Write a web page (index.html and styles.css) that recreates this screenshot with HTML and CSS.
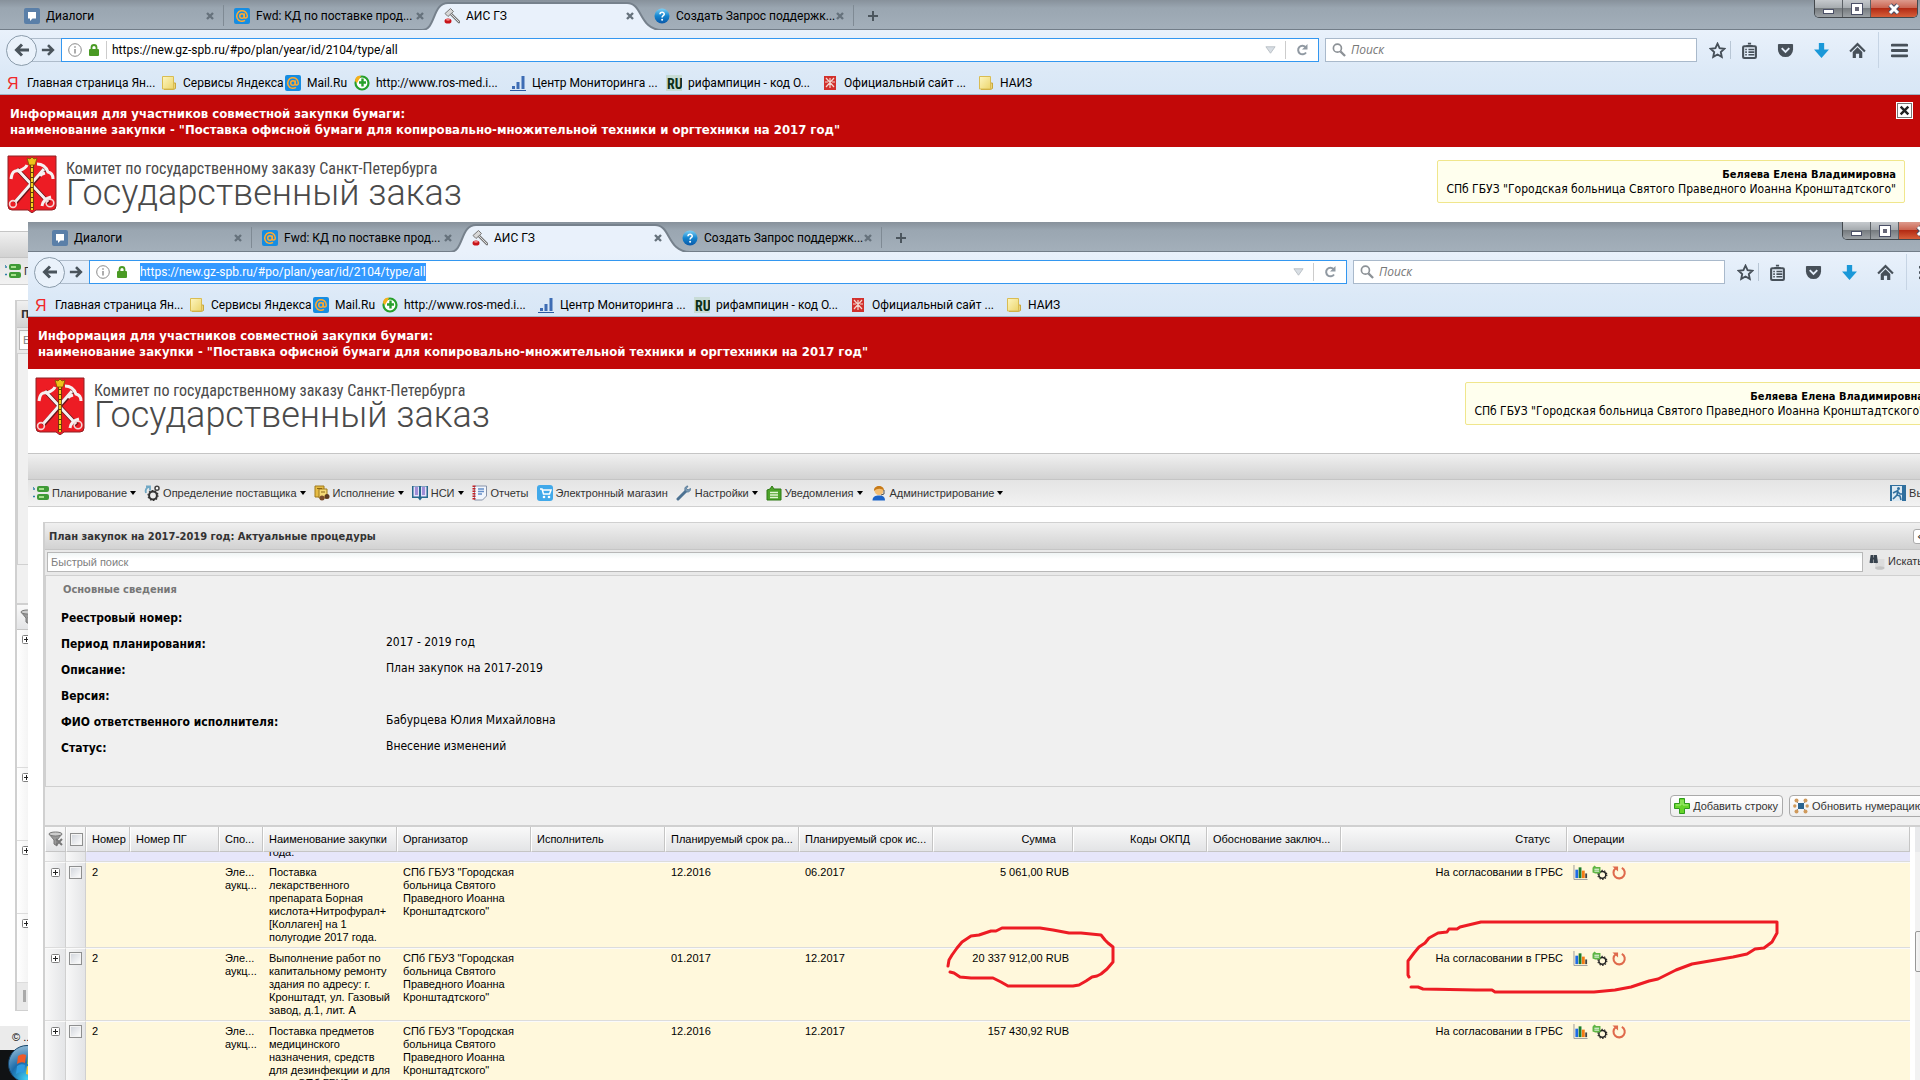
FILE: index.html
```
<!DOCTYPE html>
<html lang="ru">
<head>
    <meta charset="utf-8">
    <title>АИС ГЗ</title>
    <meta name="viewport" content="width=device-width, initial-scale=1.0">
    <link rel="stylesheet" href="styles.css">
</head>
<body>
    <!-- Иконки -->
    <svg class="sprite" aria-hidden="true">
        <defs>
            <linearGradient id="blueBall" x1="0" y1="0" x2="0" y2="1">
                <stop offset="0" stop-color="#7fd0f4"/><stop offset=".5" stop-color="#1485cf"/><stop offset="1" stop-color="#0a58a8"/>
            </linearGradient>
            <linearGradient id="folderFill" x1="0" y1="0" x2="1" y2="1">
                <stop offset="0" stop-color="#fdf6c0"/><stop offset="1" stop-color="#ecd56c"/>
            </linearGradient>
        </defs>
        <symbol id="i-dialog" viewBox="0 0 16 16"><rect width="16" height="16" rx="2" fill="#5a7fa8"/><path d="M4 4h8v6.500H8.500L6 13v-2.500H4z" fill="#fff"/></symbol>
        <symbol id="i-mail" viewBox="0 0 16 16"><rect width="16" height="16" rx="2" fill="#168de2"/><circle cx="8" cy="8" r="2.300" fill="none" stroke="#ffa930" stroke-width="1.500"/><path d="M10.300 5.500v3.300c0 2 3 1.600 3-.8a5.300 5.300 0 1 0-2.300 4.400" fill="none" stroke="#ffa930" stroke-width="1.500"/></symbol>
        <symbol id="i-gavel" viewBox="0 0 16 16"><path d="M7 6l8 8" stroke="#777" stroke-width="2.600" stroke-linecap="round"/><path d="M7 6l8 8" stroke="#ddd" stroke-width="1"/><path d="M1 5.500L6.500.5l3 3L4 8.500z" fill="#d8d8d8" stroke="#777"/><ellipse cx="4" cy="13" rx="3.500" ry="2.600" fill="#c8141a"/><ellipse cx="4" cy="11.800" rx="2" ry="1" fill="#f08080"/></symbol>
        <symbol id="i-help" viewBox="0 0 16 16"><circle cx="8" cy="8" r="7.500" fill="url(#blueBall)"/><path d="M6 6.200c0-2.800 4.300-2.500 4.200 0 0 1.500-2.100 1.600-2.100 3.300" fill="none" stroke="#fff" stroke-width="1.600"/><circle cx="8.100" cy="11.800" r="1" fill="#fff"/></symbol>
        <symbol id="i-x" viewBox="0 0 10 10"><path d="M2 2l6 6M8 2L2 8" stroke="#66727c" stroke-width="2.400"/></symbol>
        <symbol id="i-plus" viewBox="0 0 12 12"><path d="M6 1v10M1 6h10" stroke="#4c565e" stroke-width="2"/></symbol>
        <symbol id="i-back" viewBox="0 0 16 16"><path d="M15 8H3M8 2.500L2.500 8 8 13.500" fill="none" stroke="#4a545c" stroke-width="3"/></symbol>
        <symbol id="i-fwd" viewBox="0 0 16 16"><path d="M1 8h12M8 2.500L13.500 8 8 13.500" fill="none" stroke="#4a545c" stroke-width="3"/></symbol>
        <symbol id="i-info" viewBox="0 0 14 14"><circle cx="7" cy="7" r="6.300" fill="none" stroke="#8b8b8b"/><path d="M7 6v4.500M7 3.200v1.600" stroke="#8b8b8b" stroke-width="1.400"/></symbol>
        <symbol id="i-lock" viewBox="0 0 12 14"><rect x="1" y="6" width="10" height="7" rx="1" fill="#4a9a24"/><path d="M3.500 6.500V4.500a2.500 2.500 0 0 1 5 0v2" fill="none" stroke="#4a9a24" stroke-width="1.800"/></symbol>
        <symbol id="i-drop" viewBox="0 0 12 8"><path d="M1 .5h10L6 7.500z" fill="#d8dee4" stroke="#b8bec4"/></symbol>
        <symbol id="i-reload" viewBox="0 0 14 14"><path d="M10.500 4A4.300 4.300 0 1 0 11 9.500" fill="none" stroke="#9099a2" stroke-width="2"/><path d="M12.500 1v5.500H7z" fill="#9099a2"/></symbol>
        <symbol id="i-search" viewBox="0 0 15 15"><circle cx="5.800" cy="5.500" r="4.300" fill="none" stroke="#8c9196" stroke-width="1.800"/><path d="M9 9l5 5" stroke="#8c9196" stroke-width="2.400"/></symbol>
        <symbol id="i-star" viewBox="0 0 18 18"><path d="M9 1.800l2.200 4.700 5.100.6-3.800 3.500 1 5.200L9 13.200l-4.500 2.600 1-5.200L1.700 7.100l5.100-.6z" fill="none" stroke="#475059" stroke-width="2"/></symbol>
        <symbol id="i-list" viewBox="0 0 16 16"><rect x="2" y="4" width="12" height="11" rx="1" fill="none" stroke="#475059" stroke-width="2"/><path d="M5 3.500h6M6.500 1.500h3M4 7h1.500M7 7h5.500M4 9.500h1.500M7 9.500h5.500M4 12h1.500M7 12h5.500" stroke="#475059" stroke-width="1.500"/></symbol>
        <symbol id="i-pocket" viewBox="0 0 18 16"><path d="M2 1h14a1 1 0 0 1 1 1v5a8 8 0 0 1-16 0V2a1 1 0 0 1 1-1z" fill="#475059"/><path d="M5 5.500l4 4 4-4" fill="none" stroke="#e4eefa" stroke-width="2"/></symbol>
        <symbol id="i-down" viewBox="0 0 16 16"><path d="M5.500 1h5v6H15l-7 8-7-8h4.500z" fill="#1a98d8"/></symbol>
        <symbol id="i-home" viewBox="0 0 16 16"><path d="M1 9l7-7 7 7" fill="none" stroke="#475059" stroke-width="2"/><path d="M3.500 9.500L8 5l4.500 4.500V15h-3v-4h-3v4h-3z" fill="#475059"/></symbol>
        <symbol id="i-menu" viewBox="0 0 16 14"><path d="M1 2h14M1 7h14M1 12h14" stroke="#475059" stroke-width="2.600" stroke-linecap="round"/></symbol>
        <symbol id="i-yandex" viewBox="0 0 16 16"><text x="2" y="14" font-family="Liberation Sans, sans-serif" font-size="16" fill="#f0282a">Я</text></symbol>
        <symbol id="i-folder" viewBox="0 0 16 16"><path d="M3 14.500h9.500l2-1V8h-2" fill="#ead37a" stroke="#c9a83c"/><path d="M1.500 1.500h11v12.500h-11z" fill="url(#folderFill)" stroke="#d9bc52"/></symbol>
        <symbol id="i-rosmed" viewBox="0 0 16 16"><circle cx="8" cy="8" r="6.500" fill="#fff" stroke="#27a02b" stroke-width="2.200"/><path d="M1 6c0-4 3-6 6-5L3 8z" fill="#f5b01c"/><path d="M8.500 3.500v8M5 7.500h7" stroke="#27a02b" stroke-width="2.400"/></symbol>
        <symbol id="i-chart" viewBox="0 0 16 16"><path d="M0 15.500h16" stroke="#2c5aa0"/><path d="M3.500 14v-3M8 14V7M13 14V1" stroke="#3d6cb4" stroke-width="3"/></symbol>
        <symbol id="i-ru" viewBox="0 0 16 16"><rect width="16" height="16" fill="#c8dcd6"/><text x="1" y="14" font-family="Roboto Condensed, sans-serif" font-size="14" font-weight="bold" fill="#0c3018">RU</text></symbol>
        <symbol id="i-arms" viewBox="0 0 16 16"><rect x="2" y="1" width="12" height="14" fill="#d2302c"/><path d="M8 3v10M4 3l8 9M12 3l-8 9M3 7h3M10 7h3" stroke="#f2d8d0" stroke-width="1.200"/></symbol>
        <symbol id="i-crest" viewBox="0 0 50 58">
            <path d="M1 1h48v50q0 4-4 4H29l-4 3-4-3H5q-4 0-4-4z" fill="#ed1c24" stroke="#8f2025"/>
            <g fill="none" stroke="#6d1418" stroke-width="4.500"><path d="M8 48L38 14M42 48L10 14"/></g>
            <g fill="none" stroke="#f5f1f1" stroke-width="3"><path d="M8 47L37 14M41 47L10 14"/><path d="M4 24q1-10 8-8 7-3 8-6M30 9q8 0 11 8 5 1 5 7M38 18q-4 1-5 3"/><path d="M35 51q1-7 9-9"/></g>
            <circle cx="6" cy="49" r="3.400" fill="none" stroke="#f5d5d5" stroke-width="1.600"/><circle cx="43" cy="48" r="3.800" fill="none" stroke="#f5d5d5" stroke-width="1.600"/>
            <path d="M25 8v47" stroke="#5e3c08" stroke-width="3.600"/><path d="M25 8v47" stroke="#f3d21c" stroke-width="2" stroke-dasharray="4 1"/>
            <path d="M20 3l3 1 2-2 2 2 3-1-2 7h-6z" fill="#eec21a" stroke="#7a4e08" stroke-width=".8"/>
        </symbol>
        <symbol id="i-plan" viewBox="0 0 16 16"><path d="M0 4h2M0 11.500h2M0 2v1" stroke="#2f7fa8" stroke-width="1.600"/><rect x="4" y="1" width="12" height="6" rx="2" fill="#3f9a37"/><rect x="4" y="9" width="12" height="6" rx="2" fill="#3f9a37"/><path d="M6 4h5M6 12h5" stroke="#a6e08c" stroke-width="2"/></symbol>
        <symbol id="i-gears" viewBox="0 0 16 16"><circle cx="9" cy="10.500" r="3.900" fill="none" stroke="#333" stroke-width="2" /><circle cx="9" cy="10.500" r="5" fill="none" stroke="#333" stroke-width="1.200" stroke-dasharray="1.500 1.600"/><circle cx="13" cy="3.300" r="2" fill="#fff" stroke="#444" stroke-width="1.500"/><path d="M2 8c-1-3 0-5 3-6M2 1.500h4v4" fill="none" stroke="#6fa7c4" stroke-width="1.800"/></symbol>
        <symbol id="i-exec" viewBox="0 0 16 16"><path d="M1 1h9v11H1z" fill="#e6bc44" stroke="#a07a1c"/><path d="M5 4h8v9H5z" fill="#f4d876" stroke="#a07a1c"/><path d="M3 3.500h5M7 7h4" stroke="#8a6414"/><circle cx="13" cy="11.500" r="2.500" fill="#5c3a22"/><circle cx="8" cy="13" r="2.500" fill="#7b4c2c"/></symbol>
        <symbol id="i-book" viewBox="0 0 16 16"><path d="M0 1h16v12h-6L8 15.500 6 13H0z" fill="#27688c"/><path d="M1.500 1.500H7v10H1.500zM9 1.500h5.500v10H9z" fill="#e6e0fa"/><path d="M3 3h3M3 5h3M3 7h3M3 9h3M10 3h3M10 5h3M10 7h3M10 9h3" stroke="#5b3fb4"/></symbol>
        <symbol id="i-report" viewBox="0 0 16 16"><path d="M2.500 1h12v10l-4 4h-8z" fill="#f1f5fc" stroke="#8792a8"/><path d="M2 .5v15" stroke="#c42228" stroke-width="3" stroke-dasharray="1.500 1"/><path d="M6 4h6M6 6.500h6M6 9h4" stroke="#668ec8" stroke-width="1.400"/></symbol>
        <symbol id="i-shop" viewBox="0 0 16 16"><rect width="16" height="16" rx="3" fill="#41a9ea"/><path d="M3 4h2l1.500 5h6L14 5H6" fill="none" stroke="#fff" stroke-width="1.500"/><circle cx="7" cy="12" r="1.300" fill="#fff"/><circle cx="12" cy="12" r="1.300" fill="#fff"/></symbol>
        <symbol id="i-wrench" viewBox="0 0 16 16"><path d="M2 14l8-8" stroke="#4d7292" stroke-width="3" stroke-linecap="round"/><path d="M14.500 3.500L12 5l-1.500-1.500L12 1C9 1 8 4 9.500 6S15 7 14.500 3.500z" fill="#7d9cb6" stroke="#4d7292" stroke-width=".8"/></symbol>
        <symbol id="i-notice" viewBox="0 0 16 16"><path d="M1 5l3-1 2-3 2 3h7v11H1z" fill="#4da32a" stroke="#2f7a14"/><path d="M4 7.500h8M4 10h8M4 12.500h8" stroke="#e3f6d4" stroke-width="1.300"/></symbol>
        <symbol id="i-admin" viewBox="0 0 16 16"><path d="M1.500 15.500c0-4 3-5 6.500-5s6 1 6 5z" fill="#1d64c8"/><circle cx="8" cy="5.500" r="4.500" fill="#f4bf74"/><path d="M3 6C2.500-.8 13.500-.8 13 6 11 3 6 3 3 6z" fill="#c77a18"/><path d="M13 5v4l-3 1" fill="none" stroke="#555"/></symbol>
        <symbol id="i-exit" viewBox="0 0 16 16"><rect width="16" height="16" fill="#2f6f9e"/><path d="M2 1h10v15H2z" fill="#dce9f2"/><circle cx="8.500" cy="3.500" r="1.500" fill="#2f6f9e"/><path d="M8 5l-1 5-4 4M7 10l3 1 1 4M3 8l4-2 3 3h3" fill="none" stroke="#2f6f9e" stroke-width="1.600"/></symbol>
        <symbol id="i-find" viewBox="0 0 16 16"><path d="M6 5h9.500v9.500H6z" fill="#dcdcdc"/><ellipse cx="10.800" cy="14" rx="4.700" ry="1.800" fill="#c4c4c4"/><path d="M1.500 9l1-7h1v7M6 9V2h1l1 7M3.500 4.500h3" fill="none" stroke="#37424d" stroke-width="2"/></symbol>
        <symbol id="i-add" viewBox="0 0 16 16"><path d="M5.500.5h5v5h5v5h-5v5h-5v-5h-5v-5h5z" fill="#66d42a" stroke="#2f9a1c"/><path d="M7 2v5H2M9 2v5h5" fill="none" stroke="#a8ee7c"/></symbol>
        <symbol id="i-renum" viewBox="0 0 16 16"><path d="M3 3l10 10M13 3L3 13" stroke="#8f8f8f"/><rect x="5" y="5" width="6" height="6" fill="#2b648f"/><g fill="#cf9a5c"><circle cx="3.500" cy="2.500" r="2"/><circle cx="12.500" cy="2.500" r="2"/><circle cx="1.800" cy="8" r="1.700"/><circle cx="14.200" cy="8" r="1.700"/><circle cx="3.500" cy="13.500" r="2"/><circle cx="12.500" cy="13.500" r="2"/></g></symbol>
        <symbol id="i-filter" viewBox="0 0 16 16"><path d="M1 3h13l-5 6v6l-3-2V9z" fill="#999" stroke="#777"/><ellipse cx="7.500" cy="3" rx="6.500" ry="2" fill="#ccc" stroke="#777"/><path d="M8 8l6 6M14 8l-6 6" stroke="#777" stroke-width="2"/></symbol>
        <symbol id="i-expand" viewBox="0 0 9 9"><rect x=".5" y=".5" width="8" height="8" rx="1" fill="#fff" stroke="#808080"/><path d="M2 4.500h5M4.500 2v5" stroke="#222"/></symbol>
        <symbol id="i-bars" viewBox="0 0 16 16"><path d="M.5 0v15.500H15" fill="none" stroke="#999"/><path d="M3.500 14V5" stroke="#1e6be6" stroke-width="3"/><path d="M7 14V2.500" stroke="#1d7c2c" stroke-width="3"/><path d="M10.500 14V6" stroke="#f47a14" stroke-width="3"/><path d="M13.500 14V9" stroke="#444" stroke-width="2"/></symbol>
        <symbol id="i-oper" viewBox="0 0 16 16"><circle cx="10.500" cy="10.500" r="3.700" fill="none" stroke="#222" stroke-width="1.600"/><circle cx="10.500" cy="10.500" r="4.800" fill="none" stroke="#222" stroke-width="1.200" stroke-dasharray="1.500 1.500"/><path d="M0 3l2-2.500L4 2h4.500v7H3L0 8z" fill="#5fb544"/><path d="M2 4.500h5M2 6.500h5" stroke="#fff"/></symbol>
        <symbol id="i-undo" viewBox="0 0 16 16"><path d="M11 3a6 6 0 1 1-6.500.5" fill="none" stroke="#df6a4c" stroke-width="2.200"/><path d="M1 1.500h6v5.500z" fill="#df6a4c"/></symbol>
    </svg>

    <!-- Общая верхняя часть обоих окон, вставляется из script.js -->
    <template id="window-top">
        <div class="tabs">
            <div class="tab"><svg class="icon"><use href="#i-dialog"/></svg><span>Диалоги</span><button class="tab-close" aria-label="Закрыть"><svg><use href="#i-x"/></svg></button></div>
            <div class="tab tab-next"><svg class="icon"><use href="#i-mail"/></svg><span>Fwd: КД по поставке прод...</span><button class="tab-close" aria-label="Закрыть"><svg><use href="#i-x"/></svg></button></div>
            <div class="tab active"><svg class="tab-shape" viewBox="0 0 240 28" preserveAspectRatio="none"><path d="M0 28C14 28 10 1 26 1H205C221 1 217 28 240 28" /></svg><svg class="icon"><use href="#i-gavel"/></svg><span>АИС ГЗ</span><button class="tab-close" aria-label="Закрыть"><svg><use href="#i-x"/></svg></button></div>
            <div class="tab"><svg class="icon"><use href="#i-help"/></svg><span>Создать Запрос поддержк...</span><button class="tab-close" aria-label="Закрыть"><svg><use href="#i-x"/></svg></button></div>
            <button class="tab-new" aria-label="Новая вкладка"><svg><use href="#i-plus"/></svg></button>
            <div class="win-buttons">
                <button class="win-min" aria-label="Свернуть"><i></i></button>
                <button class="win-max" aria-label="Развернуть"><i></i></button>
                <button class="win-close" aria-label="Закрыть окно"><svg viewBox="0 0 12 12"><path d="M2 2l8 8M10 2l-8 8" stroke="#4a4f66" stroke-width="5"/><path d="M2 2l8 8M10 2l-8 8" stroke="#fff" stroke-width="3"/></svg></button>
            </div>
        </div>
        <div class="toolbar">
            <button class="nav-back" aria-label="Назад"><svg class="icon"><use href="#i-back"/></svg></button>
            <button class="nav-fwd" aria-label="Вперёд"><svg class="icon"><use href="#i-fwd"/></svg></button>
            <div class="url">
                <svg class="icon-s"><use href="#i-info"/></svg>
                <svg class="icon-s"><use href="#i-lock"/></svg>
                <input type="text" aria-label="Адрес" value="https://new.gz-spb.ru/#po/plan/year/id/2104/type/all">
                <svg class="url-drop"><use href="#i-drop"/></svg>
                <button class="url-reload" aria-label="Обновить"><svg class="icon-s"><use href="#i-reload"/></svg></button>
            </div>
            <div class="search"><svg class="icon-s"><use href="#i-search"/></svg><input type="text" aria-label="Поиск" placeholder="Поиск"></div>
            <div class="tools">
                <button class="tool tool-star" aria-label="Закладка"><svg><use href="#i-star"/></svg></button>
                <button class="tool" aria-label="Список"><svg><use href="#i-list"/></svg></button>
                <button class="tool" aria-label="Pocket"><svg><use href="#i-pocket"/></svg></button>
                <button class="tool" aria-label="Загрузки"><svg><use href="#i-down"/></svg></button>
                <button class="tool" aria-label="Домой"><svg><use href="#i-home"/></svg></button>
                <button class="tool tool-menu" aria-label="Меню"><svg><use href="#i-menu"/></svg></button>
            </div>
        </div>
        <div class="bookmarks">
            <a class="long" href="#"><svg class="icon"><use href="#i-yandex"/></svg>Главная страница Ян...</a>
            <a class="mid" href="#"><svg class="icon"><use href="#i-folder"/></svg>Сервисы Яндекса</a>
            <a class="short" href="#"><svg class="icon"><use href="#i-mail"/></svg>Mail.Ru</a>
            <a class="long" href="#"><svg class="icon"><use href="#i-rosmed"/></svg>http://www.ros-med.i...</a>
            <a class="long" href="#"><svg class="icon"><use href="#i-chart"/></svg>Центр Мониторинга ...</a>
            <a class="long" href="#"><svg class="icon"><use href="#i-ru"/></svg>рифампицин - код О...</a>
            <a class="long" href="#"><svg class="icon"><use href="#i-arms"/></svg>Официальный сайт ...</a>
            <a class="short" href="#"><svg class="icon"><use href="#i-folder"/></svg>НАИЗ</a>
        </div>
        <div class="banner">
            <p>Информация для участников совместной закупки бумаги:<br>наименование закупки - "Поставка офисной бумаги для копировально-множительной техники и оргтехники на 2017 год"</p>
            <button class="banner-close" aria-label="Закрыть"><svg viewBox="0 0 10 10"><path d="M1.500 1.500l7 7M8.500 1.500l-7 7" stroke="#222" stroke-width="2.200"/></svg></button>
        </div>
        <header class="site-head">
            <svg class="crest"><use href="#i-crest"/></svg>
            <div class="site-name">
                <p class="committee">Комитет по государственному заказу Санкт-Петербурга</p>
                <h1>Государственный заказ</h1>
            </div>
            <div class="user"><b>Беляева Елена Владимировна</b><br>СПб ГБУЗ "Городская больница Святого Праведного Иоанна Кронштадтского"</div>
        </header>
        <div class="strip"></div>
    </template>

    <!-- Нижнее окно браузера -->
    <section class="window window-back">
        <div class="window-top"></div>
        <nav class="menu">
            <a href="#" aria-label="Планирование"><svg class="icon"><use href="#i-plan"/></svg>П</a>
        </nav>
        <div class="panel">
            <h2>П</h2>
            <div class="quick"><input type="text" aria-label="Быстрый поиск" placeholder="Быстрый поиск"></div>
            <div class="details"></div>
            <div class="actions"></div>
            <div class="back-head"><svg class="icon"><use href="#i-filter"/></svg></div>
            <div class="back-rows">
                <div class="back-row tall"><svg class="expand"><use href="#i-expand"/></svg></div>
                <div class="back-row"><svg class="expand"><use href="#i-expand"/></svg></div>
                <div class="back-row"><svg class="expand"><use href="#i-expand"/></svg></div>
                <div class="back-row"><svg class="expand"><use href="#i-expand"/></svg></div>
            </div>
            <div class="back-paging"><i></i></div>
        </div>
        <footer class="copy">© ..</footer>
    </section>

    <div class="taskbar">
        <button class="start" aria-label="Пуск">
            <svg viewBox="0 0 40 40">
                <defs><radialGradient id="orb" cx=".5" cy=".9" r=".9"><stop offset="0" stop-color="#3fd0f4"/><stop offset=".5" stop-color="#1b6cab"/><stop offset="1" stop-color="#8fb8d4"/></radialGradient></defs>
                <circle cx="20" cy="20" r="18.500" fill="url(#orb)" stroke="#16456b"/>
                <path d="M11 12q4-3 8-1l-1 8q-4-2-8 1z" fill="#ef5a28"/><path d="M21 12q4 2 9-1l-2 8q-4 3-8 1z" fill="#8cc63f"/>
                <path d="M10 22q4-3 8-1l-1 8q-4-2-8 1z" fill="#2d9be0"/><path d="M20 22q4 2 8-1l-2 8q-3 3-7 1z" fill="#fdc82f"/>
            </svg>
        </button>
    </div>

    <!-- Верхнее окно браузера -->
    <section class="window window-front">
        <div class="window-top"></div>
        <nav class="menu">
            <a class="has-sub" href="#"><svg class="icon"><use href="#i-plan"/></svg>Планирование</a>
            <a class="has-sub" href="#"><svg class="icon"><use href="#i-gears"/></svg>Определение поставщика</a>
            <a class="has-sub" href="#"><svg class="icon"><use href="#i-exec"/></svg>Исполнение</a>
            <a class="has-sub" href="#"><svg class="icon"><use href="#i-book"/></svg>НСИ</a>
            <a href="#"><svg class="icon"><use href="#i-report"/></svg>Отчеты</a>
            <a href="#"><svg class="icon"><use href="#i-shop"/></svg>Электронный магазин</a>
            <a class="has-sub" href="#"><svg class="icon"><use href="#i-wrench"/></svg>Настройки</a>
            <a class="has-sub" href="#"><svg class="icon"><use href="#i-notice"/></svg>Уведомления</a>
            <a class="has-sub" href="#"><svg class="icon"><use href="#i-admin"/></svg>Администрирование</a>
            <a class="exit" href="#"><svg class="icon"><use href="#i-exit"/></svg>Выход</a>
        </nav>
        <div class="panel">
            <h2>План закупок на 2017-2019 год: Актуальные процедуры<button class="panel-tool" aria-label="Свернуть панель">«</button></h2>
            <div class="quick">
                <input type="text" aria-label="Быстрый поиск" placeholder="Быстрый поиск">
                <button class="find"><svg class="icon"><use href="#i-find"/></svg>Искать</button>
            </div>
            <div class="details">
                <h3>Основные сведения</h3>
                <dl>
                    <dt>Реестровый номер:</dt><dd></dd>
                    <dt>Период планирования:</dt><dd>2017 - 2019 год</dd>
                    <dt>Описание:</dt><dd>План закупок на 2017-2019</dd>
                    <dt>Версия:</dt><dd></dd>
                    <dt>ФИО ответственного исполнителя:</dt><dd>Бабурцева Юлия Михайловна</dd>
                    <dt>Статус:</dt><dd>Внесение изменений</dd>
                </dl>
            </div>
            <div class="actions">
                <button class="action"><svg class="icon"><use href="#i-add"/></svg>Добавить строку</button>
                <button class="action"><svg class="icon"><use href="#i-renum"/></svg>Обновить нумерацию</button>
            </div>
            <div class="grid">
                <div class="grid-clip">
                    <table>
                        <colgroup><col class="w-exp"><col class="w-chk"><col class="w-44"><col class="w-pg"><col class="w-44"><col class="w-134"><col class="w-134"><col class="w-134"><col class="w-134"><col class="w-134"><col class="w-sum"><col class="w-134"><col class="w-134"><col class="w-status"><col></colgroup>
                        <thead>
                            <tr>
                                <th class="c-exp"><svg class="icon"><use href="#i-filter"/></svg></th>
                                <th class="c-chk"><input type="checkbox" aria-label="Выбрать все"></th>
                                <th>Номер</th>
                                <th>Номер ПГ</th>
                                <th>Спо...</th>
                                <th>Наименование закупки</th>
                                <th>Организатор</th>
                                <th>Исполнитель</th>
                                <th>Планируемый срок ра...</th>
                                <th>Планируемый срок ис...</th>
                                <th class="right">Сумма</th>
                                <th class="right">Коды ОКПД</th>
                                <th>Обоснование заключ...</th>
                                <th class="right">Статус</th>
                                <th>Операции</th>
                            </tr>
                        </thead>
                        <tbody>
                            <tr class="first">
                                <td class="c-exp"></td><td class="c-chk"></td><td></td><td></td><td></td>
                                <td><div class="cut">года.</div></td>
                                <td></td><td></td><td></td><td></td><td></td><td></td><td></td><td></td><td></td>
                            </tr>
                            <tr>
                                <td class="c-exp"><svg class="expand"><use href="#i-expand"/></svg></td>
                                <td class="c-chk"><input type="checkbox" aria-label="Выбрать строку"></td>
                                <td>2</td>
                                <td></td>
                                <td>Эле...<br>аукц...</td>
                                <td>Поставка<br>лекарственного<br>препарата Борная<br>кислота+Нитрофурал+<br>[Коллаген] на 1<br>полугодие 2017 года.</td>
                                <td>СПб ГБУЗ "Городская<br>больница Святого<br>Праведного Иоанна<br>Кронштадтского"</td>
                                <td></td>
                                <td>12.2016</td>
                                <td>06.2017</td>
                                <td class="right">5 061,00 RUB</td>
                                <td></td>
                                <td></td>
                                <td class="right">На согласовании в ГРБС</td>
                                <td class="ops"><svg class="icon"><use href="#i-bars"/></svg><svg class="icon"><use href="#i-oper"/></svg><svg class="icon"><use href="#i-undo"/></svg></td>
                            </tr>
                            <tr>
                                <td class="c-exp"><svg class="expand"><use href="#i-expand"/></svg></td>
                                <td class="c-chk"><input type="checkbox" aria-label="Выбрать строку"></td>
                                <td>2</td>
                                <td></td>
                                <td>Эле...<br>аукц...</td>
                                <td>Выполнение работ по<br>капитальному ремонту<br>здания по адресу: г.<br>Кронштадт, ул. Газовый<br>завод, д.1, лит. А</td>
                                <td>СПб ГБУЗ "Городская<br>больница Святого<br>Праведного Иоанна<br>Кронштадтского"</td>
                                <td></td>
                                <td>01.2017</td>
                                <td>12.2017</td>
                                <td class="right">20 337 912,00 RUB</td>
                                <td></td>
                                <td></td>
                                <td class="right">На согласовании в ГРБС</td>
                                <td class="ops"><svg class="icon"><use href="#i-bars"/></svg><svg class="icon"><use href="#i-oper"/></svg><svg class="icon"><use href="#i-undo"/></svg></td>
                            </tr>
                            <tr>
                                <td class="c-exp"><svg class="expand"><use href="#i-expand"/></svg></td>
                                <td class="c-chk"><input type="checkbox" aria-label="Выбрать строку"></td>
                                <td>2</td>
                                <td></td>
                                <td>Эле...<br>аукц...</td>
                                <td>Поставка предметов<br>медицинского<br>назначения, средств<br>для дезинфекции и для<br>нужд СПб ГБУЗ</td>
                                <td>СПб ГБУЗ "Городская<br>больница Святого<br>Праведного Иоанна<br>Кронштадтского"</td>
                                <td></td>
                                <td>12.2016</td>
                                <td>12.2017</td>
                                <td class="right">157 430,92 RUB</td>
                                <td></td>
                                <td></td>
                                <td class="right">На согласовании в ГРБС</td>
                                <td class="ops"><svg class="icon"><use href="#i-bars"/></svg><svg class="icon"><use href="#i-oper"/></svg><svg class="icon"><use href="#i-undo"/></svg></td>
                            </tr>
                        </tbody>
                    </table>
                </div>
                <div class="scrollbar"><i></i></div>
            </div>
        </div>
    </section>

    <!-- Пометки красным -->
    <svg class="marks" viewBox="0 0 1920 1080" aria-hidden="true">
        <path d="M948 966L949 960 952 955 957 948 962 942 971 936 979 935 991 931 996 931 1002 928H1040L1053 930 1069 933H1081L1101 935 1105 940 1108 943 1113 947V962L1107 969 1101 974 1097 976 1092 977 1086 981 1079 985 1073 986H1008L1001 982 993 978H971L960 977 954 973 950 972"/>
        <path d="M1409 977L1408 975V961L1414 953 1419 947 1425 943 1429 938 1438 933 1447 932 1449 929H1457L1460 927 1481 922H1777V933L1772 942 1764 948 1755 949 1747 954 1733 957 1692 964 1676 970 1658 979 1649 981 1631 987 1615 990 1594 992H1495L1492 990H1476L1423 989 1418 987H1411"/>
    </svg>

    <script src="script.js"></script>
</body>
</html>
```

FILE: script.js
```
// вкладки, адресная строка и шапка сайта одинаковы в обоих окнах
var top_ = document.getElementById('window-top');
document.querySelectorAll('div.window-top').forEach(function(box) {
    box.appendChild(top_.content.cloneNode(true));
});
```

FILE: styles.css
```
* {
    box-sizing: border-box;
}
html, body {
    height: 100%;
}
body {
    margin: 0;
    position: relative;
    overflow: hidden;
    background: #fff;
    color: #000;
    font-family: "Liberation Sans", Arial, sans-serif;
    font-size: 11px;
    line-height: 13px;
}
p, h1, h2, h3, dl, dd {
    margin: 0;
}
a {
    color: inherit;
    text-decoration: none;
}
button {
    padding: 0;
    border: 0;
    background: none;
    font: inherit;
    color: inherit;
}
input {
    font: inherit;
    color: inherit;
}
.sprite {
    position: absolute;
    width: 0;
    height: 0;
}
.icon {
    flex: none;
    width: 16px;
    height: 16px;
}
.icon-s {
    flex: none;
    width: 14px;
    height: 14px;
}

/* windows */
.window {
    position: absolute;
    width: 100%;
    background: #fff;
    overflow: hidden;
}
.window-back {
    left: 0;
    top: 0;
}
.window-front {
    left: 28px;
    top: 222px;
    bottom: 0;
}

/* tab strip */
.tabs {
    display: flex;
    height: 30px;
    padding-left: 14px;
    background: linear-gradient(#87919b, #9aa6b1 8px, #a3afba);
    border-bottom: 1px solid #727d88;
    font: 12px/16px Roboto, "Open Sans", sans-serif;
}
.tab {
    position: relative;
    display: flex;
    align-items: center;
    gap: 6px;
    width: 210px;
    padding: 3px 9px 0 10px;
}
.tab:not(.active):not(.tab-next)::after {
    content: "";
    position: absolute;
    right: 0;
    top: 5px;
    height: 21px;
    border-right: 1px solid #7f8a94;
}
.tab span {
    position: relative;
    flex: 1;
    min-width: 0;
    white-space: nowrap;
}
.tab .icon, .tab-close {
    position: relative;
}
.tab-close svg {
    display: block;
    width: 10px;
    height: 10px;
}
.tab-shape {
    position: absolute;
    left: -12px;
    top: 2px;
    width: 240px;
    height: 28px;
    fill: #e9f1fb;
    stroke: #76818c;
    stroke-width: 2;
}
.tab-new svg {
    display: block;
    width: 12px;
    height: 12px;
    margin: 3px 13px 0;
}
.win-buttons {
    display: flex;
    height: 18px;
    margin-left: auto;
    margin-right: 2px;
    border: 1px solid #43484d;
    border-top: 0;
    border-radius: 0 0 5px 5px;
    overflow: hidden;
}
.win-buttons button {
    display: flex;
    align-items: center;
    justify-content: center;
    width: 28px;
    background: linear-gradient(#c5c9cd, #a4a9ad 50%, #777c80 50%, #9da2a6);
    border-right: 1px solid #5c6166;
}
.win-buttons .win-close {
    width: 46px;
    border: 0;
    background: linear-gradient(#dd9a8c, #c9604c 50%, #b32b14 50%, #d65f3a);
}
.win-min i {
    width: 11px;
    height: 5px;
    margin-top: 5px;
    background: #fff;
    border: 1px solid #4a4f66;
}
.win-max i {
    width: 10px;
    height: 10px;
    background: #667;
    border: 3px solid #fff;
    outline: 1px solid #4a4f66;
}
.win-close svg {
    width: 12px;
    height: 12px;
}

/* address bar */
.toolbar {
    display: flex;
    align-items: center;
    height: 42px;
    padding: 0 0 2px 6px;
    background: linear-gradient(#e9f1fb, #dce9f7);
}
.nav-back {
    position: relative;
    z-index: 1;
    display: flex;
    align-items: center;
    justify-content: center;
    width: 31px;
    height: 31px;
    border: 1px solid #8b9cab;
    border-radius: 50%;
    background: #eaf2fb;
}
.nav-fwd {
    display: flex;
    align-items: center;
    justify-content: center;
    width: 31px;
    height: 24px;
    margin-left: -7px;
    padding-left: 4px;
    border: 1px solid #aebccb;
    border-right: 0;
}
.nav-fwd .icon {
    width: 14px;
    height: 14px;
}
.url {
    display: flex;
    flex: 1;
    align-items: center;
    gap: 5px;
    height: 24px;
    padding-left: 6px;
    border: 1px solid #3397f0;
    background: #fff;
}
.url input {
    flex: 1;
    height: 18px;
    padding: 0 0 0 5px;
    border: 0;
    border-left: 1px solid #ccc;
    background: none;
    font: 12px/16px Roboto, "Open Sans", sans-serif;
}
/* address is selected in the front window */
.window-front .url input {
    flex: none;
    field-sizing: content;
    padding: 0;
    border: 0;
    margin-left: 6px;
    margin-right: auto;
    background: #3399ff;
    color: #fff;
}
.url-drop {
    width: 11px;
    height: 8px;
}
.url-reload {
    height: 18px;
    padding: 2px 9px;
    margin-left: 4px;
    border-left: 1px solid #ccc;
}
.search {
    display: flex;
    align-items: center;
    gap: 5px;
    width: 372px;
    height: 24px;
    margin-left: 6px;
    padding-left: 6px;
    border: 1px solid #a9b9cb;
    background: #fff;
}
.search input {
    flex: 1;
    border: 0;
    padding: 0;
    background: none;
    font: italic 12px/16px "Open Sans", "Noto Sans", sans-serif;
}
.search input::placeholder {
    color: #777;
    opacity: 1;
}
.tools {
    display: flex;
    align-items: center;
    padding-left: 8px;
}
.tool {
    display: flex;
    align-items: center;
    justify-content: center;
    width: 36px;
    height: 36px;
}
.tool svg {
    width: 17px;
    height: 17px;
}
.tool-star {
    width: 26px;
    height: 18px;
    border-right: 1px solid #b8c6d5;
}
.tool-menu {
    width: 42px;
    margin-left: 3px;
    border-left: 1px solid #c6d4e4;
}
.bookmarks {
    display: flex;
    align-items: center;
    height: 23px;
    padding-left: 5px;
    background: linear-gradient(#dce9f7, #d8e7f6);
    border-bottom: 1px solid #9fb3c5;
    font: 12px/16px Roboto, "Open Sans", sans-serif;
}
.bookmarks a {
    display: flex;
    align-items: center;
    gap: 6px;
    white-space: nowrap;
}
.bookmarks .long {
    width: 156px;
}
.bookmarks .mid {
    width: 124px;
}
.bookmarks .short {
    width: 69px;
}

/* red notice */
.banner {
    display: flex;
    justify-content: space-between;
    align-items: flex-start;
    height: 52px;
    padding: 11px 8px 0 10px;
    background: #c20808;
    color: #fff;
    font: bold 13px/16px "DejaVu Sans Condensed", Tahoma, sans-serif;
    white-space: nowrap;
}
.banner-close {
    width: 15px;
    height: 15px;
    margin-top: -3px;
    border: 1px solid #777;
    outline: 1px solid #fff;
    background: #fff;
}
.banner-close svg {
    display: block;
    width: 11px;
    height: 11px;
    margin: 1px;
}

/* site header */
.site-head {
    display: flex;
    height: 84px;
    padding: 8px 15px 0 7px;
}
.crest {
    width: 50px;
    height: 58px;
}
.site-name {
    padding: 5px 0 0 9px;
    color: #4a4a4a;
    white-space: nowrap;
}
.committee {
    font: 16px/18px "Roboto Condensed", Roboto, sans-serif;
}
.site-name h1 {
    font: 300 36px/30px Roboto, sans-serif;
}
.user {
    align-self: flex-start;
    margin: 5px 0 0 auto;
    padding: 6px 8px;
    border: 1px solid #f0e68c;
    border-radius: 2px;
    background: #ffffee;
    text-align: right;
    white-space: nowrap;
    font: 12px/14px "DejaVu Sans Condensed", Verdana, sans-serif;
}
.user b {
    font-size: 11px;
}
.strip {
    height: 27px;
    border-top: 1px solid #c5c5c5;
    border-bottom: 1px solid #c5c5c5;
    background: linear-gradient(#f0f0f0, #d2d2d2);
}
.menu {
    display: flex;
    align-items: center;
    gap: 8px;
    height: 27px;
    padding-left: 5px;
    border-bottom: 1px solid #d0d0d0;
    background: linear-gradient(#e4e4e4, #f2f2f2);
    color: #333;
    white-space: nowrap;
}
.menu a {
    display: flex;
    align-items: center;
    gap: 3px;
}
.menu .has-sub::after {
    content: "";
    border: 3px solid transparent;
    border-top: 4px solid #000;
    border-bottom: 0;
}
.menu .exit {
    margin-left: auto;
    padding-right: 6px;
}

/* plan panel */
.panel {
    margin: 15px 15px 0;
    border: 1px solid #d0d0d0;
    border-left-width: 2px;
    background: #f0f0f0;
}
.panel h2 {
    display: flex;
    align-items: center;
    justify-content: space-between;
    height: 27px;
    padding: 1px 4px 0;
    background: linear-gradient(#f0f0f0, #d2d2d2);
    border-bottom: 1px solid #c5c5c5;
    color: #333;
    font: bold 11px/14px "DejaVu Sans Condensed", Tahoma, sans-serif;
}
.panel-tool {
    width: 15px;
    height: 15px;
    border: 1px solid #aaa;
    border-radius: 3px;
    background: #fff;
}
.quick {
    display: flex;
    align-items: center;
    gap: 6px;
    height: 26px;
    padding: 0 4px 2px 2px;
    background: #e9e9e9;
    border-bottom: 1px solid #d0d0d0;
    color: #333;
}
.quick input {
    flex: 1;
    height: 20px;
    padding: 0 3px;
    border: 1px solid #b8b8b8;
    background: linear-gradient(#f0f5f5, #fff 6px);
}
.quick input::placeholder {
    color: #808080;
    opacity: 1;
}
.find {
    display: flex;
    align-items: center;
    gap: 3px;
    width: 59px;
}
.details {
    height: 211px;
    padding: 7px 15px 0;
    border-left: 1px solid #d0d0d0;
    border-bottom: 1px solid #d0d0d0;
}
.details h3 {
    padding-left: 2px;
    color: #777;
    font: bold 11px/14px "DejaVu Sans Condensed", Tahoma, sans-serif;
}
.details dl {
    display: grid;
    grid-template-columns: 325px 1fr;
    grid-auto-rows: 26px;
    margin-top: 6px;
    font: 12px/26px "DejaVu Sans Condensed", Tahoma, sans-serif;
}
.details dt {
    font-weight: bold;
    line-height: 30px;
}
.actions {
    display: flex;
    align-items: center;
    justify-content: flex-end;
    gap: 6px;
    height: 40px;
    padding-right: 4px;
    border-bottom: 2px solid #d0d0d0;
}
.action {
    display: flex;
    align-items: center;
    gap: 3px;
    height: 22px;
    padding: 0 4px 0 3px;
    border: 1px solid #aaa;
    border-radius: 4px;
    background: linear-gradient(#fff, #eee);
    color: #333;
    white-space: nowrap;
}

/* purchase table */
.grid {
    display: flex;
    background: #fff;
}
.grid-clip {
    flex: 1;
    margin-right: 5px;
}
.grid table {
    width: 100%;
    table-layout: fixed;
    border-collapse: separate;
    border-spacing: 0;
}
.w-exp { width: 21px; }
.w-chk { width: 20px; }
.w-44 { width: 44px; }
.w-pg { width: 89px; }
.w-134 { width: 134px; }
.w-sum { width: 140px; }
.w-status { width: 226px; }
.grid th {
    position: relative;
    z-index: 1;
    height: 25px;
    padding: 0 0 0 5px;
    border-right: 1px solid #c5c5c5;
    border-bottom: 1px solid #c5c5c5;
    border-left: 1px solid #fff;
    background: linear-gradient(#f9f9f9, #e3e4e6);
    font-weight: normal;
    text-align: left;
    white-space: nowrap;
}
.grid th.right {
    padding-right: 16px;
    text-align: right;
}
.grid td {
    padding: 3px 4px 3px 6px;
    border-top: 1px solid #fafafa;
    border-bottom: 1px solid #dcdcdc;
    background: #fff8dc;
    vertical-align: top;
    white-space: nowrap;
}
.grid .first td {
    height: 10px;
    padding-top: 0;
    padding-bottom: 2px;
    border-top: 0;
    background: #e6e6fa;
}
.cut {
    display: flex;
    align-items: flex-end;
    height: 7px;
    overflow: hidden;
}
.grid td.right {
    text-align: right;
}
.grid .c-exp, .grid .c-chk {
    padding: 0;
    text-align: center;
}
.grid td.c-exp, .grid td.c-chk, .grid .first .c-exp, .grid .first .c-chk {
    padding-top: 3px;
    border-right: 1px solid #d0d0d0;
    background: linear-gradient(90deg, #f8f8f8, #e4e5e7);
}
.grid .first .c-exp, .grid .first .c-chk {
    padding: 0;
}
.grid .c-exp .icon {
    display: block;
    margin: auto;
}
.expand {
    display: block;
    width: 9px;
    height: 9px;
}
.grid td .expand {
    margin: 2px auto 0;
}
.grid input {
    display: block;
    appearance: none;
    width: 13px;
    height: 13px;
    margin: 0 auto;
    border: 1px solid #8e8f8f;
    outline: 0;
    background: linear-gradient(135deg, #cfd3da, #fff);
    box-shadow: inset 0 0 0 1px #f4f4f4;
}
.grid .ops {
    padding-top: 2px;
    padding-bottom: 0;
}
.ops .icon {
    margin-right: 3px;
    height: 15px;
}
.scrollbar {
    width: 17px;
    padding-top: 104px;
    background: linear-gradient(#e9eaec 25px, #f2f2f2 25px);
}
.scrollbar i {
    display: block;
    height: 41px;
    border: 1px solid #979797;
    border-radius: 2px;
    background: linear-gradient(90deg, #f5f5f5, #d4d4d4);
}

/* part of the back window left of the front one */
.back-head {
    height: 25px;
    padding: 4px 3px;
    border-bottom: 1px solid #c5c5c5;
    background: linear-gradient(#f9f9f9, #e3e4e6);
}
.back-row {
    height: 73px;
    padding: 5px;
    border-bottom: 1px solid #dcdcdc;
    background: linear-gradient(90deg, #fff, #e8e8e8 24px);
}
.back-row.tall {
    height: 138px;
}
.back-row:last-child {
    height: 69px;
}
.back-paging {
    height: 27px;
    padding: 7px 6px;
    background: #e9e9e9;
}
.back-paging i {
    display: block;
    width: 3px;
    height: 12px;
    background: #aaa;
}
.copy {
    height: 26px;
    margin-top: 15px;
    padding: 5px 12px;
    background: #ebebeb;
}
.taskbar {
    position: absolute;
    left: 0;
    right: 0;
    bottom: 0;
    height: 30px;
    background: #101214;
}
.start {
    display: block;
    width: 40px;
    height: 40px;
    margin: -6px 0 0 7px;
}
.start svg {
    display: block;
}

.marks {
    position: absolute;
    left: 0;
    top: 0;
    width: 1920px;
    height: 1080px;
    pointer-events: none;
    fill: none;
    stroke: #ed1c24;
    stroke-width: 3;
    stroke-linecap: round;
    stroke-linejoin: round;
}
```
